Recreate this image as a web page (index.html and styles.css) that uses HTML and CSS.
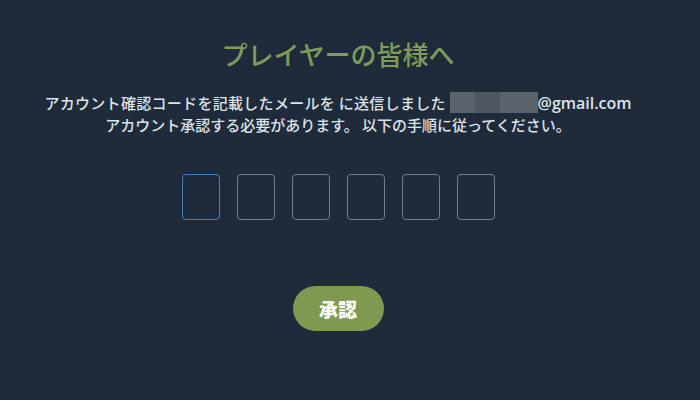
FILE: index.html
```html
<!DOCTYPE html>
<html lang="ja">
<head>
    <meta charset="UTF-8">
    <meta name="viewport" content="width=device-width, initial-scale=1.0">
    <title>アカウント承認</title>
    <link rel="stylesheet" href="styles.css">
</head>
<body>
    <div class="container">
        <h1 class="title">プレイヤーの皆様へ</h1>
        <p class="message">
            <span class="first-line">アカウント確認コードを記載したメールを に送信しました </span><span class="masked"><span class="mask-a"></span><span class="mask-b"></span><span class="mask-c"></span></span><span class="email">@gmail.com</span><br>
            アカウント承認する必要があります。 以下の手順に従ってください。
        </p>

        <div class="code-inputs">
            <input type="text" maxlength="1" class="code-box active">
            <input type="text" maxlength="1" class="code-box">
            <input type="text" maxlength="1" class="code-box">
            <input type="text" maxlength="1" class="code-box">
            <input type="text" maxlength="1" class="code-box">
            <input type="text" maxlength="1" class="code-box">
        </div>

        <button class="confirm">承認</button>
    </div>
</body>
</html>
```

FILE: styles.css
```css
body {
    margin: 0;
    background: #1f2b3a;
    font-family: "Open Sans", "Noto Sans CJK JP", sans-serif;
    color: #dde2e8;
}
.container {
    width: 676px;
    height: 400px;
    text-align: center;
    padding-top: 35px;
    box-sizing: border-box;
}
.title {
    margin: 0;
    font-family: "Noto Sans CJK JP", sans-serif;
    font-size: 26px;
    font-weight: 500;
    line-height: 38px;
    color: #7e9b58;
}
.message {
    margin: 19px 0 0;
    font-family: "Noto Sans CJK JP", sans-serif;
    font-size: 15px;
    font-weight: 500;
    line-height: 21px;
}
.first-line {
    letter-spacing: 0.3px;
}
.masked {
    display: inline-flex;
    vertical-align: -4px;
    height: 21px;
}
.mask-a, .mask-c {
    background: #5a626d;
}
.mask-a { width: 25px; }
.mask-b {
    width: 25px;
    background: #4e5661;
}
.mask-c { width: 38px; }
.email {
    font-family: "Open Sans", sans-serif;
    font-size: 16px;
    font-weight: 600;
}
.code-inputs {
    display: flex;
    justify-content: center;
    gap: 17px;
    margin-top: 39px;
}
.code-box {
    width: 38px;
    height: 46px;
    box-sizing: border-box;
    border: 1.5px solid #6e7c8c;
    border-radius: 4px;
    background: transparent;
    outline: none;
}
.code-box.active {
    border-color: #4f7fb8;
}
.confirm {
    display: block;
    margin: 66px auto 0;
    width: 91px;
    height: 45px;
    border: none;
    border-radius: 23px;
    background: #7f9a50;
    color: #fff;
    font-family: "Noto Sans CJK JP", sans-serif;
    font-size: 19px;
    font-weight: 900;
    cursor: pointer;
}
```
